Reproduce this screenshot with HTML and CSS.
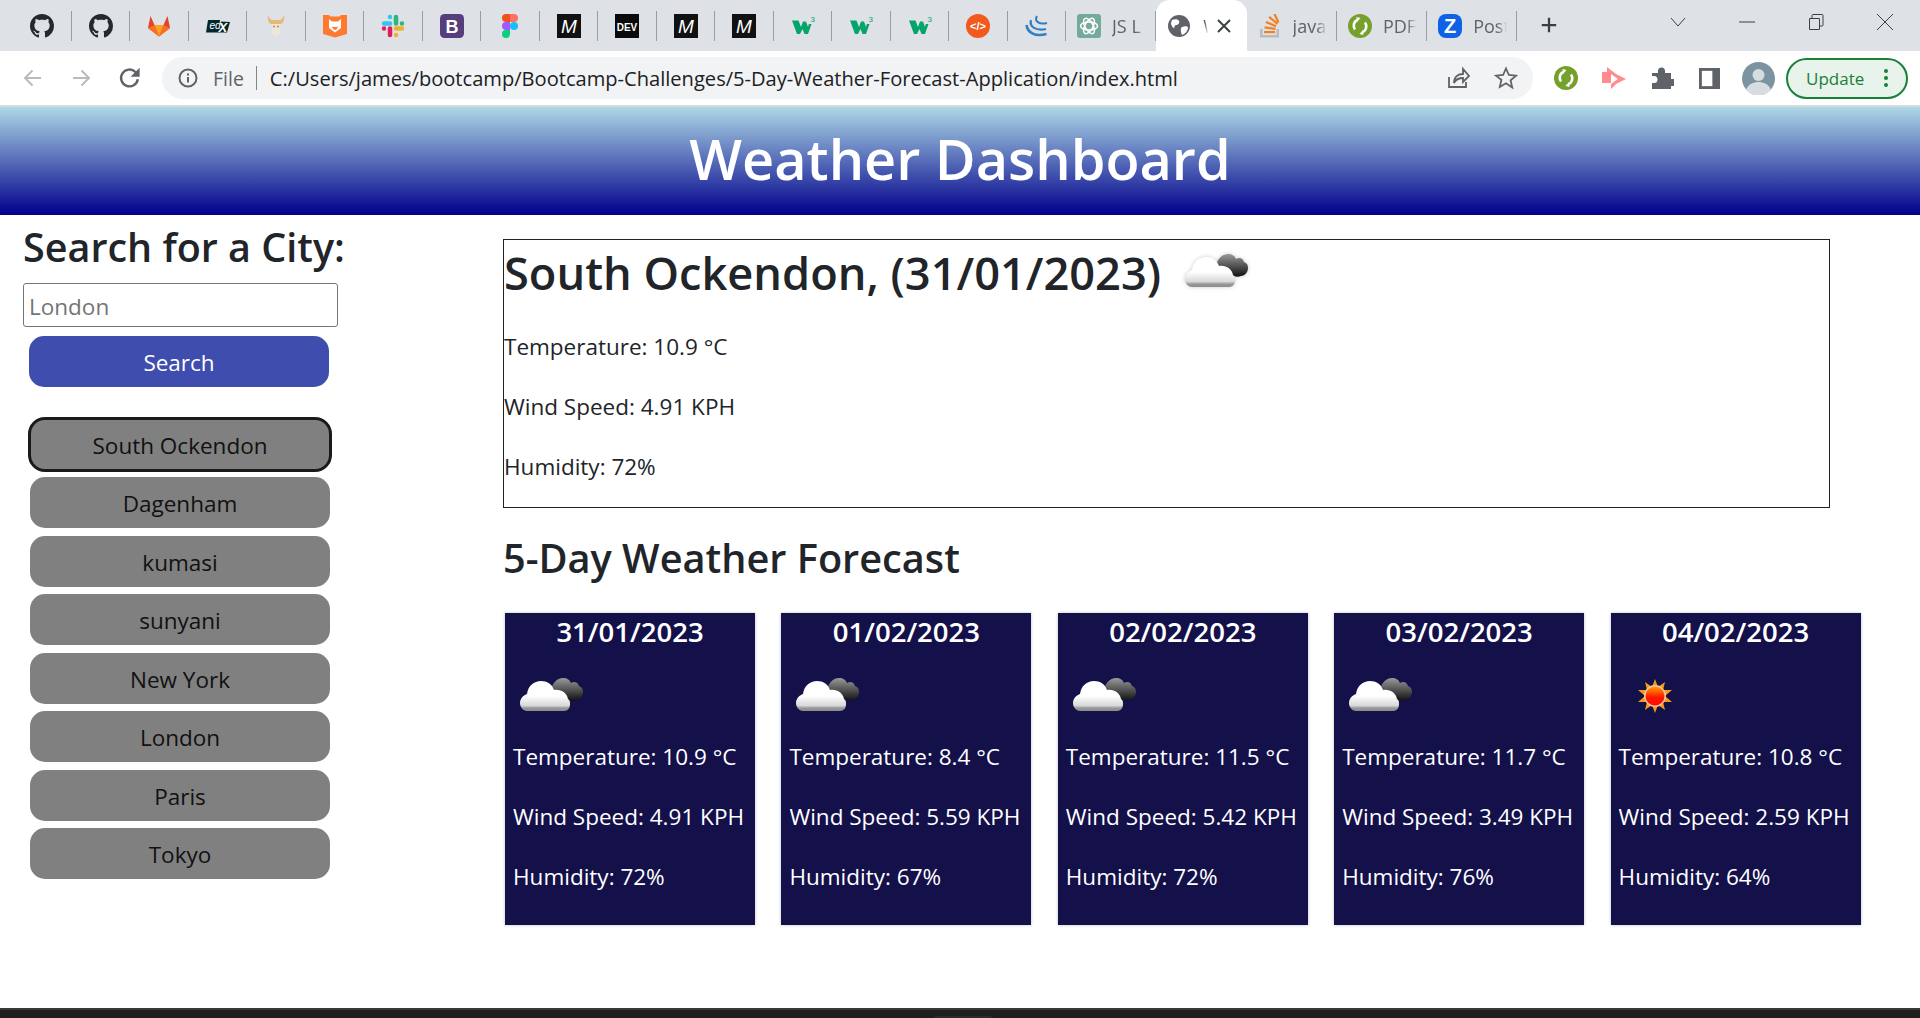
FILE: index.html
```html
<!DOCTYPE html>
<html lang="en">
<head>
    <meta charset="UTF-8">
    <meta name="viewport" content="width=device-width, initial-scale=1.0">
    <title>Weather Dashboard</title>
    <link rel="stylesheet" href="styles.css">
</head>
<body>
    <svg class="defs" width="0" height="0">
        <defs>
            <symbol id="github" viewBox="0 0 16 16">
                <path fill="#24292e" d="M8 0C3.58 0 0 3.58 0 8c0 3.54 2.29 6.53 5.47 7.59.4.07.55-.17.55-.38 0-.19-.01-.82-.01-1.49-2.01.37-2.53-.49-2.69-.94-.09-.23-.48-.94-.82-1.13-.28-.15-.68-.52-.01-.53.63-.01 1.08.58 1.23.82.72 1.21 1.87.87 2.33.66.07-.52.28-.87.51-1.07-1.78-.2-3.64-.89-3.64-3.95 0-.87.31-1.59.82-2.15-.08-.2-.36-1.02.08-2.12 0 0 .67-.21 2.2.82.64-.18 1.32-.27 2-.27.68 0 1.36.09 2 .27 1.53-1.04 2.2-.82 2.2-.82.44 1.1.16 1.92.08 2.12.51.56.82 1.27.82 2.15 0 3.07-1.87 3.75-3.65 3.95.29.25.54.73.54 1.48 0 1.07-.01 1.93-.01 2.2 0 .21.15.46.55.38A8.013 8.013 0 0016 8c0-4.42-3.58-8-8-8z"/>
            </symbol>
            <symbol id="medium" viewBox="0 0 24 24">
                <rect width="24" height="24" fill="#111"/>
                <text x="12" y="18.500" class="medium-mark">M</text>
            </symbol>
            <symbol id="w3" viewBox="0 0 24 24">
                <path fill="#04a46b" d="M1 6.500h6.500L10 13l2-5.500h3l2 5.500.8-3h2.700L17 20h-3.500l-2-5L9 20H6z"/>
                <text x="19.500" y="8" class="w3-mark">3</text>
            </symbol>
            <symbol id="sync" viewBox="0 0 24 24">
                <circle cx="12" cy="12" r="12" fill="#76a02b"/>
                <path fill="none" stroke="#fff" stroke-width="2.600" d="M7 15.500a6.500 6.500 0 0 1 2-9.500M17 8.500a6.500 6.500 0 0 1-2 9.500"/>
                <path fill="#fff" d="M12.500 4l-4-1 .5 5zM11.500 20l4 1-.5-5z"/>
            </symbol>
            <linearGradient id="cloud-white" x1="0" y1="0" x2="0" y2="1">
                <stop offset="0.5" stop-color="#fff"/>
                <stop offset="0.82" stop-color="#d8d8d8"/>
                <stop offset="0.9" stop-color="#999"/>
                <stop offset="1" stop-color="#8c8c8c"/>
            </linearGradient>
            <linearGradient id="cloud-dark" x1="0" y1="0" x2="0" y2="1">
                <stop offset="0" stop-color="#9a9a9a"/>
                <stop offset="0.5" stop-color="#555"/>
                <stop offset="1" stop-color="#111"/>
            </linearGradient>
            <linearGradient id="sun-core" x1="0" y1="0" x2="0" y2="1">
                <stop offset="0" stop-color="#ffa200"/>
                <stop offset="0.6" stop-color="#ff1200"/>
            </linearGradient>
            <symbol id="cloud" viewBox="0 0 80 80">
                <path fill="url(#cloud-dark)" d="M38 36c0-8 6-14 12-14 4 0 7 2 8 5 3-2 7-1 8 3 3 1 4 3 4 6 0 4-3 8-7 8-2 1-5 1-7 0H48z"/>
                <path fill="url(#cloud-white)" d="M14 55c-4 0-7-4-7-8 0-5 4-8 7-9 1-8 7-13 14-13 6 0 11 3 13 9 7-1 13 3 14 9 2 1 2 3 2 5 0 4-2 7-6 7z"/>
            </symbol>
            <symbol id="sun" viewBox="0 0 80 80">
                <path fill="#f59a16" d="M36 23l3 8 7-5-2 8 9 0-7 6 7 6-9 0 2 8-7-5-3 8-3-8-7 5 2-8-9 0 7-6-7-6 9 0-2-8 7 5z"/>
                <circle cx="36" cy="40" r="11" fill="#f6c3a0"/>
                <circle cx="36" cy="40" r="9.500" fill="url(#sun-core)"/>
            </symbol>
        </defs>
    </svg>

    <div class="tabstrip">
        <div class="tab"><svg class="ico"><use href="#github"/></svg></div>
        <div class="tab"><svg class="ico"><use href="#github"/></svg></div>
        <div class="tab">
            <svg class="ico" viewBox="0 0 24 24">
                <path fill="#e24329" d="M12 22.500L1 14 3.500 2l4 9h9l4-9L23 14z"/>
                <path fill="#fc6d26" d="M12 22.500L1 14l6.500-3zM12 22.500L23 14l-6.500-3z"/>
                <path fill="#fca326" d="M12 22.500L7.500 11h9z"/>
            </svg>
        </div>
        <div class="tab">
            <svg class="ico" viewBox="0 0 24 24">
                <path fill="#02262b" d="M2 6h12v1.500l10 .5-3 10.500H0z"/>
                <text x="3.500" y="15" class="edx-mark">ed</text>
                <text x="12.500" y="17.500" class="edx-x">X</text>
            </svg>
        </div>
        <div class="tab">
            <svg class="ico" viewBox="0 0 24 24">
                <path fill="#e8b878" d="M4 1c1 3 2 4 4 5h8c2-1 3-2 4-5 1 5-1 8-4 10H8C5 9 3 6 4 1z"/>
                <path fill="#eee6dc" d="M7.500 10h9L16 19l-4 4-4-4z"/>
                <circle cx="10" cy="12.500" r="1" fill="#a88858"/>
                <circle cx="14" cy="12.500" r="1" fill="#a88858"/>
            </svg>
        </div>
        <div class="tab">
            <svg class="ico" viewBox="0 0 24 24">
                <path fill="#ff7a2f" d="M0 1h6l1.500 1.500h9L18 1h6v19l-12 3.500L0 20z"/>
                <path fill="#fff" d="M6 5l3 2.500h6L18 5v9l-6 4.500L6 14z"/>
                <path fill="#ff7a2f" d="M9 12l1.500 1h3L15 12l-1 3-2 1-2-1z"/>
            </svg>
        </div>
        <div class="tab">
            <svg class="ico" viewBox="0 0 24 24">
                <g stroke-width="4.500" stroke-linecap="round">
                    <path stroke="#36c5f0" d="M3 9.500h6M9 3v0"/>
                    <path stroke="#2eb67d" d="M15 3v6.500M21 9.500h0"/>
                    <path stroke="#ecb22e" d="M15 14.500h6M15 21h0"/>
                    <path stroke="#e01e5a" d="M9 14.500V21M3 14.500h0"/>
                </g>
            </svg>
        </div>
        <div class="tab">
            <svg class="ico" viewBox="0 0 24 24">
                <rect width="24" height="24" rx="4.500" fill="#563d7c"/>
                <text x="12" y="18.500" class="bootstrap-mark">B</text>
            </svg>
        </div>
        <div class="tab">
            <svg class="ico" viewBox="0 0 24 24">
                <path fill="#f24e1e" d="M8 0h4v8H8a4 4 0 0 1 0-8z"/>
                <path fill="#ff7262" d="M12 0h4a4 4 0 0 1 0 8h-4z"/>
                <path fill="#a259ff" d="M8 8h4v8H8a4 4 0 0 1 0-8z"/>
                <circle cx="16" cy="12" r="4" fill="#1abcfe"/>
                <path fill="#0acf83" d="M8 16h4v4a4 4 0 1 1-4-4z"/>
            </svg>
        </div>
        <div class="tab"><svg class="ico"><use href="#medium"/></svg></div>
        <div class="tab">
            <svg class="ico" viewBox="0 0 24 24">
                <rect width="24" height="24" fill="#0a0a0a"/>
                <text x="12" y="16.500" class="dev-mark">DEV</text>
            </svg>
        </div>
        <div class="tab"><svg class="ico"><use href="#medium"/></svg></div>
        <div class="tab"><svg class="ico"><use href="#medium"/></svg></div>
        <div class="tab"><svg class="ico"><use href="#w3"/></svg></div>
        <div class="tab"><svg class="ico"><use href="#w3"/></svg></div>
        <div class="tab"><svg class="ico"><use href="#w3"/></svg></div>
        <div class="tab">
            <svg class="ico" viewBox="0 0 24 24">
                <circle cx="12" cy="12" r="12" fill="#f1591d"/>
                <text x="12" y="16" class="code-mark">&lt;/&gt;</text>
            </svg>
        </div>
        <div class="tab">
            <svg class="ico" viewBox="0 0 24 24" fill="none" stroke="#2f7fc1">
                <path stroke-width="2.600" d="M1.500 11c1 8 9 12 20 9"/>
                <path stroke-width="2.200" d="M6 6c-2 7 5 11 15 9"/>
                <path stroke-width="2" d="M12 2c-3 5 2 9 10 7"/>
            </svg>
        </div>
        <div class="tab tab-wide">
            <svg class="ico" viewBox="0 0 24 24">
                <rect width="24" height="24" rx="3" fill="#74aa9c"/>
                <g fill="none" stroke="#fff" stroke-width="1.500">
                    <ellipse cx="12" cy="12" rx="8.500" ry="4"/>
                    <ellipse cx="12" cy="12" rx="8.500" ry="4" transform="rotate(60 12 12)"/>
                    <ellipse cx="12" cy="12" rx="8.500" ry="4" transform="rotate(120 12 12)"/>
                </g>
            </svg>
            <span class="tab-title">JS L</span>
        </div>
        <div class="tab tab-wide tab-active">
            <svg class="ico" viewBox="0 0 24 24">
                <circle cx="12" cy="12" r="11" fill="#5f6368"/>
                <path fill="#fff" d="M5 6c3-1 6-1 7 1s-1 4-3 4-1 3-2 3-3-3-3-5zM15 13c2-1 5-1 6 0 0 4-3 7-6 8-1-2-2-7 0-8z"/>
            </svg>
            <span class="tab-title tab-title-cut">W</span>
            <svg class="tab-close" viewBox="0 0 14 14"><path d="M1 1l12 12M13 1L1 13"/></svg>
        </div>
        <div class="tab tab-wide">
            <svg class="ico" viewBox="0 0 24 24">
                <path fill="#bcbbbb" d="M2 15h2.500v6h14v-6H21v8.500H2z"/>
                <g fill="#f48024">
                    <rect x="6" y="17" width="11" height="2.200"/>
                    <rect x="6.500" y="13" width="11" height="2.200" transform="rotate(8 12 14)"/>
                    <rect x="7.500" y="9" width="11" height="2.200" transform="rotate(22 13 10)"/>
                    <rect x="10" y="5" width="11" height="2.200" transform="rotate(40 15 6)"/>
                    <rect x="13" y="2" width="11" height="2.200" transform="rotate(65 18 3)"/>
                </g>
            </svg>
            <span class="tab-title">java</span>
        </div>
        <div class="tab tab-wide">
            <svg class="ico"><use href="#sync"/></svg>
            <span class="tab-title">PDF</span>
        </div>
        <div class="tab tab-wide">
            <svg class="ico" viewBox="0 0 24 24">
                <rect width="24" height="24" rx="8" fill="#0f62e6"/>
                <text x="12" y="19" class="zapier-mark">Z</text>
            </svg>
            <span class="tab-title">Post</span>
        </div>
        <svg class="new-tab" viewBox="0 0 20 20"><path d="M10 2v16M2 10h16"/></svg>
        <div class="window-controls">
            <svg viewBox="0 0 16 10" class="win-ico win-chevron"><path d="M1 1l7 8 7-8"/></svg>
            <svg viewBox="0 0 16 16" class="win-ico win-min"><path d="M0 8h16"/></svg>
            <svg viewBox="0 0 16 16" class="win-ico win-restore"><path d="M1.500 4.500h10v11h-10zM4 4V1.500q0-1 1-1h9q1 0 1 1V11q0 1-1 1h-2"/></svg>
            <svg viewBox="0 0 16 16" class="win-ico win-close"><path d="M0 0l16 16M16 0L0 16"/></svg>
        </div>
    </div>

    <div class="toolbar">
        <svg class="nav-ico nav-off nav-back" viewBox="0 0 20 20"><path d="M18 10H2M9.500 2.500L2 10l7.500 7.500"/></svg>
        <svg class="nav-ico nav-off nav-forward" viewBox="0 0 20 20"><path d="M2 10h16M10.500 2.500L18 10l-7.500 7.500"/></svg>
        <svg class="nav-ico nav-reload" viewBox="0 0 20 20"><path d="M16.500 11a7 7 0 1 1-2-6l2.500 2.500"/><path class="nav-fill" d="M18 1.500V9h-7.500z"/></svg>
        <div class="omnibox">
            <svg class="info-ico" viewBox="0 0 20 20"><circle cx="10" cy="10" r="8.500"/><path d="M10 9v5.500M10 5.500v2"/></svg>
            <span class="omni-file">File</span>
            <span class="omni-sep"></span>
            <span class="omni-url">C:/Users/james/bootcamp/Bootcamp-Challenges/5-Day-Weather-Forecast-Application/index.html</span>
            <svg class="omni-ico omni-share" viewBox="0 0 24 24"><path d="M3 11v10h17v-5M8 17c0-6 4-9 9-9V3l6 7-6 6v-4c-4 0-7 1-9 5z"/></svg>
            <svg class="omni-ico omni-star" viewBox="0 0 24 24"><path d="M12 2.500l2.900 6.500 7.100.7-5.400 4.700 1.600 7L12 17.200l-6.200 3.700 1.600-7L2 9.700 9.100 9z"/></svg>
        </div>
        <svg class="ext-ico ext-sync"><use href="#sync"/></svg>
        <svg class="ext-ico ext-pink" viewBox="0 0 24 24">
            <path fill="#ff8a8f" d="M0 6h5V1l9 7 10 5-10 5-5 5v-6H0z"/>
            <path fill="#fff" d="M9 8l7 5-7 5z"/>
        </svg>
        <svg class="ext-ico ext-puzzle" viewBox="0 0 24 24">
            <path fill="#5f6368" d="M2 7h6V5a3.500 3.500 0 0 1 7 0v2h6v6h2a3.500 3.500 0 0 1 0 7h-2v3H2v-6h2a3.500 3.500 0 0 0 0-7H2z"/>
        </svg>
        <svg class="ext-ico ext-panel" viewBox="0 0 22 22">
            <rect width="22" height="22" fill="#5f6368"/>
            <rect x="3" y="3" width="11" height="16" fill="#fff"/>
        </svg>
        <svg class="avatar" viewBox="0 0 33 33">
            <circle cx="16.500" cy="16.500" r="16.500" fill="#7c93a1"/>
            <circle cx="16.500" cy="13" r="6" fill="#d5dde1"/>
            <path fill="#d5dde1" d="M4 28c2-6 8-8 12.500-8S27 22 29 28a16.500 16.500 0 0 1-25 0z"/>
        </svg>
        <div class="update-pill">
            <span class="update-label">Update</span>
            <svg class="update-dots" viewBox="0 0 4 18"><circle cx="2" cy="2" r="2"/><circle cx="2" cy="9" r="2"/><circle cx="2" cy="16" r="2"/></svg>
        </div>
    </div>
    <div class="chrome-line"></div>

    <header class="site-header">
        <h1 class="site-title">Weather Dashboard</h1>
    </header>

    <div class="page">
        <aside class="sidebar">
            <h2 class="sidebar-title">Search for a City:</h2>
            <input class="city-input" type="text" placeholder="London">
            <button class="search-btn">Search</button>
            <div class="city-list">
                <button class="city-btn city-current">South Ockendon</button>
                <button class="city-btn">Dagenham</button>
                <button class="city-btn">kumasi</button>
                <button class="city-btn">sunyani</button>
                <button class="city-btn">New York</button>
                <button class="city-btn">London</button>
                <button class="city-btn">Paris</button>
                <button class="city-btn">Tokyo</button>
            </div>
        </aside>

        <main class="content">
            <section class="today">
                <h2 class="today-title">South Ockendon, (31/01/2023) <svg class="today-icon"><use href="#cloud"/></svg></h2>
                <p class="stat">Temperature: 10.9 °C</p>
                <p class="stat">Wind Speed: 4.91 KPH</p>
                <p class="stat">Humidity: 72%</p>
            </section>

            <h2 class="forecast-title">5-Day Weather Forecast</h2>
            <div class="forecast">
                <div class="card">
                    <h3 class="card-date">31/01/2023</h3>
                    <svg class="card-icon"><use href="#cloud"/></svg>
                    <p class="stat">Temperature: 10.9 °C</p>
                    <p class="stat">Wind Speed: 4.91 KPH</p>
                    <p class="stat">Humidity: 72%</p>
                </div>
                <div class="card">
                    <h3 class="card-date">01/02/2023</h3>
                    <svg class="card-icon"><use href="#cloud"/></svg>
                    <p class="stat">Temperature: 8.4 °C</p>
                    <p class="stat">Wind Speed: 5.59 KPH</p>
                    <p class="stat">Humidity: 67%</p>
                </div>
                <div class="card">
                    <h3 class="card-date">02/02/2023</h3>
                    <svg class="card-icon"><use href="#cloud"/></svg>
                    <p class="stat">Temperature: 11.5 °C</p>
                    <p class="stat">Wind Speed: 5.42 KPH</p>
                    <p class="stat">Humidity: 72%</p>
                </div>
                <div class="card">
                    <h3 class="card-date">03/02/2023</h3>
                    <svg class="card-icon"><use href="#cloud"/></svg>
                    <p class="stat">Temperature: 11.7 °C</p>
                    <p class="stat">Wind Speed: 3.49 KPH</p>
                    <p class="stat">Humidity: 76%</p>
                </div>
                <div class="card">
                    <h3 class="card-date">04/02/2023</h3>
                    <svg class="card-icon"><use href="#sun"/></svg>
                    <p class="stat">Temperature: 10.8 °C</p>
                    <p class="stat">Wind Speed: 2.59 KPH</p>
                    <p class="stat">Humidity: 64%</p>
                </div>
            </div>
        </main>
    </div>

    <div class="taskbar"><span class="taskbar-tab"></span></div>
</body>
</html>
```

FILE: styles.css
```css
* {
    box-sizing: border-box;
}
html, body {
    height: 1018px;
    overflow: hidden;
}
body {
    margin: 0;
    display: flex;
    flex-direction: column;
    font-family: "Open Sans", "Noto Sans", sans-serif;
    color: #212529;
    background-color: white;
}
.defs {
    position: absolute;
}

/* browser tabs */
.tabstrip {
    height: 51px;
    flex: none;
    display: flex;
    align-items: stretch;
    padding-left: 13px;
    background-color: #dee1e6;
}
.tab {
    position: relative;
    width: 58.5px;
    flex: none;
    display: flex;
    align-items: center;
    justify-content: center;
}
.tab::after {
    content: "";
    position: absolute;
    right: 0;
    top: 11px;
    height: 30px;
    width: 1px;
    background-color: #9a9da1;
}
.ico {
    width: 24px;
    height: 24px;
    flex: none;
}
.tab-wide {
    width: 90.3px;
    justify-content: flex-start;
    gap: 11px;
    padding-left: 11px;
}
.tab-title {
    white-space: nowrap;
    font-size: 18px;
    color: #5f6368;
    -webkit-mask-image: linear-gradient(to right, black 24px, transparent 34px);
    mask-image: linear-gradient(to right, black 24px, transparent 34px);
}
.tab-active {
    background-color: white;
    border-radius: 14px 14px 0 0;
}
.tab-active::after {
    display: none;
}
.tab-title-cut {
    margin: 0 -13px 0 1px;
    -webkit-mask-image: linear-gradient(to right, black 2px, transparent 5px);
    mask-image: linear-gradient(to right, black 2px, transparent 5px);
}
.tab-close {
    width: 14px;
    height: 14px;
    margin-left: -1px;
    fill: none;
    stroke: #3c4043;
    stroke-width: 2;
}
.new-tab {
    width: 18px;
    height: 18px;
    margin: 16px 0 0 23px;
    fill: none;
    stroke: #3c4043;
    stroke-width: 2.500;
}
.window-controls {
    margin-left: auto;
    display: flex;
    align-items: center;
    padding-right: 27px;
    padding-bottom: 8px;
}
.win-ico {
    fill: none;
    stroke: #3c4043;
    stroke-width: 1;
}
.win-chevron {
    width: 16px;
    height: 10px;
    margin-right: 53px;
}
.win-min {
    width: 16px;
    height: 16px;
    margin-right: 53px;
}
.win-restore {
    width: 16px;
    height: 16px;
    margin-right: 53px;
}
.win-close {
    width: 16px;
    height: 16px;
}

/* browser toolbar */
.toolbar {
    height: 54px;
    flex: none;
    display: flex;
    align-items: center;
    padding-left: 23px;
    background-color: white;
}
.nav-ico {
    width: 20px;
    height: 20px;
    flex: none;
    fill: none;
    stroke-width: 2;
}
.nav-off {
    stroke: #b9bbbe;
}
.nav-back {
    margin-right: 28px;
}
.nav-forward {
    margin-right: 27px;
}
.nav-reload {
    width: 24px;
    height: 24px;
    stroke: #5f6368;
    margin-right: 20px;
}
.nav-fill {
    fill: #5f6368;
    stroke: none;
}
.omnibox {
    width: 1371px;
    height: 42px;
    flex: none;
    display: flex;
    align-items: center;
    padding: 0 15px 0 16px;
    border-radius: 21px;
    background-color: #f1f3f4;
}
.info-ico {
    width: 20px;
    height: 20px;
    flex: none;
    fill: none;
    stroke: #5f6368;
    stroke-width: 2;
}
.omni-file {
    margin-left: 15px;
    font-size: 19.500px;
    color: #5f6368;
}
.omni-sep {
    width: 1px;
    height: 24px;
    margin: 0 13px 0 12px;
    background-color: #80868b;
}
.omni-url {
    font-size: 20.100px;
    color: #202124;
    white-space: nowrap;
}
.omni-ico {
    width: 24px;
    height: 24px;
    flex: none;
    fill: none;
    stroke: #5f6368;
    stroke-width: 1.800;
}
.omni-share {
    margin-left: auto;
    margin-right: 24px;
}
.ext-ico {
    width: 24px;
    height: 24px;
    flex: none;
}
.ext-sync {
    margin-left: 21px;
}
.ext-pink {
    margin-left: 24px;
}
.ext-puzzle {
    margin-left: 24px;
}
.ext-panel {
    width: 21px;
    height: 21px;
    margin-left: 25px;
}
.avatar {
    width: 33px;
    height: 33px;
    flex: none;
    margin-left: 22px;
}
.update-pill {
    width: 122px;
    height: 41px;
    flex: none;
    margin-left: 11px;
    display: flex;
    align-items: center;
    padding-left: 18px;
    border: 2px solid #188038;
    border-radius: 21px;
    background-color: #e8f3ec;
}
.update-label {
    font-size: 17px;
    color: #188038;
}
.update-dots {
    width: 4px;
    height: 18px;
    margin-left: 20px;
    fill: #188038;
}
.chrome-line {
    height: 2px;
    flex: none;
    background-color: #d8dadc;
}

/* page header */
.site-header {
    height: 108px;
    flex: none;
    display: flex;
    align-items: center;
    justify-content: center;
    padding-bottom: 7px;
    background: linear-gradient(#add8e6, #00008b);
}
.site-title {
    margin: 0;
    font-size: 55.800px;
    font-weight: 600;
    color: white;
}

.page {
    flex: 1;
    display: flex;
    min-height: 0;
}

/* left column */
.sidebar {
    width: 503px;
    flex: none;
    display: flex;
    flex-direction: column;
    align-items: flex-start;
    padding: 8px 0 0 23px;
}
.sidebar-title {
    margin: 0 0 12px;
    font-size: 39.500px;
    font-weight: 600;
    line-height: 48px;
    white-space: nowrap;
}
.city-input {
    width: 315px;
    height: 44px;
    padding: 3px 6px 0 5px;
    border: 1px solid #767676;
    border-radius: 3px;
    font-family: inherit;
    font-size: 22.500px;
}
.city-input::placeholder {
    color: #757575;
}
.search-btn {
    width: 300px;
    height: 51px;
    margin: 9px 0 0 6px;
    padding: 2px 0 0;
    border: none;
    border-radius: 15px;
    background-color: #3f4eae;
    color: white;
    font-family: inherit;
    font-size: 22.500px;
}
.city-list {
    display: flex;
    flex-direction: column;
    gap: 7.500px;
    margin: 31.500px 0 0 7px;
}
.city-btn {
    width: 300px;
    height: 51px;
    padding: 2px 0 0;
    border: none;
    border-radius: 15px;
    background-color: #808080;
    color: #111;
    font-family: inherit;
    font-size: 22.500px;
}
.city-current {
    outline: 3px solid #1a1a1a;
    outline-offset: -1px;
}

/* right column */
.content {
    flex: 1;
    padding-top: 24px;
}
.today {
    width: 1327px;
    height: 269px;
    border: 1px solid #222;
}
.today-title {
    display: flex;
    align-items: center;
    height: 58px;
    margin: 3px 0 28px;
    font-size: 45.200px;
    font-weight: 600;
    white-space: pre;
}
.today-icon {
    width: 80px;
    height: 80px;
    margin: -11px 0 -11px 5px;
    filter: drop-shadow(0 0 2px rgba(0, 0, 0, 0.2));
}
.stat {
    margin: 0 0 24px;
    font-size: 22.500px;
    line-height: 36px;
    white-space: nowrap;
}
.forecast-title {
    margin: 26px 0 31px;
    font-size: 39.700px;
    font-weight: 600;
    line-height: 48px;
}
.forecast {
    display: flex;
    gap: 26.400px;
    padding-left: 2px;
}
.card {
    width: 250px;
    height: 312px;
    flex: none;
    padding: 0 8px;
    background-color: #13104a;
    color: white;
    box-shadow: 0 0 3px rgba(0, 0, 0, 0.25);
}
.card-date {
    margin: 0;
    font-size: 27.500px;
    font-weight: 600;
    line-height: 38px;
    text-align: center;
}
.card-icon {
    display: block;
    width: 80px;
    height: 80px;
    margin: 5px 0 3px;
}

.taskbar {
    height: 10px;
    flex: none;
    display: flex;
    justify-content: center;
    padding: 6px 0 0 5px;
    border-top: 2px solid #3a3a3a;
    background-color: #1e1e1e;
}
.taskbar-tab {
    width: 58px;
    border-radius: 6px 6px 0 0;
    background-color: #2b2b2b;
}

/* small marks inside the tab icons */
.medium-mark {
    font-family: "Liberation Sans", sans-serif;
    font-size: 19px;
    font-style: italic;
    fill: white;
    text-anchor: middle;
}
.w3-mark {
    font-family: "Liberation Sans", sans-serif;
    font-size: 8px;
    fill: #04a46b;
}
.edx-mark {
    font-family: "Liberation Sans", sans-serif;
    font-size: 10px;
    font-style: italic;
    fill: white;
}
.edx-x {
    font-family: "Liberation Sans", sans-serif;
    font-size: 13px;
    font-weight: bold;
    font-style: italic;
    fill: white;
}
.bootstrap-mark {
    font-family: "Liberation Sans", sans-serif;
    font-size: 18px;
    font-weight: bold;
    fill: white;
    text-anchor: middle;
}
.dev-mark {
    font-family: "Liberation Sans", sans-serif;
    font-size: 10px;
    font-weight: bold;
    fill: white;
    text-anchor: middle;
}
.code-mark {
    font-family: "Liberation Sans", sans-serif;
    font-size: 11px;
    font-weight: bold;
    fill: white;
    text-anchor: middle;
}
.zapier-mark {
    font-family: "Liberation Sans", sans-serif;
    font-size: 20px;
    font-weight: bold;
    fill: white;
    text-anchor: middle;
}
```
